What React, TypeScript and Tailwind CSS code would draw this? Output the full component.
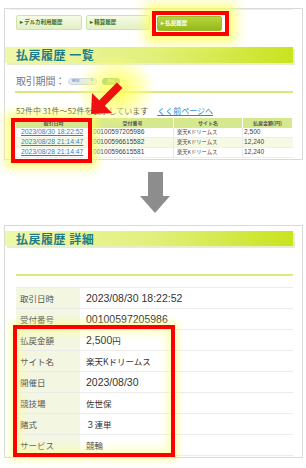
import React from "react";

const cjk = "font-['Noto_Sans_CJK_JP',sans-serif]";
const lat = "font-['Liberation_Sans','Noto_Sans_CJK_JP',sans-serif]";

function Tab({ label, active, w }: { label: string; active?: boolean; w: string }) {
  return (
    <div
      className={`${w} h-[15px] rounded-[2px] flex items-center pl-[3px] ${
        active
          ? "bg-[linear-gradient(to_bottom,#b8d43a,#94ba1c)] border border-[#9cbc2a] text-white"
          : "bg-[linear-gradient(to_bottom,#f6fbe8,#e2f0c4)] border border-[#cfe2a8] text-[#3b6a1c]"
      }`}
    >
      <span className={`${cjk} text-[5.5px] font-bold leading-none whitespace-nowrap`}>▸ {label}</span>
    </div>
  );
}

function HeaderBar({ title, h }: { title: string; h: string }) {
  return (
    <div className="relative w-[288px]">
      <div className="absolute left-[2px] top-[2px] w-[288px] h-full bg-[#e6eecb]" />
      <div
        className={`relative ${h} w-[288px] bg-[linear-gradient(to_right,#eef8aa,#e2f07e_50%,#c9e31e)] flex items-center pl-[11px]`}
      >
        <span className={`${cjk} text-[12px] font-bold text-[#1c7c8a] leading-none tracking-[0.5px]`}>{title}</span>
      </div>
    </div>
  );
}

const rows = [
  { d: "2023/08/30 18:22:52", n: "00100597205986", s: "楽天Kドリームス", a: "2,500", bg: "bg-white" },
  { d: "2023/08/28 21:14:47", n: "00100596615582", s: "楽天Kドリームス", a: "12,240", bg: "bg-[#f6fae4]" },
  { d: "2023/08/28 21:14:47", n: "00100596615581", s: "楽天Kドリームス", a: "12,240", bg: "bg-white" },
];

function DetailRow({ label, children }: { label: string; children: React.ReactNode }) {
  return (
    <div className="flex h-[21px] border-b border-[#ebebeb]">
      <div className="w-[64px] bg-[#f3f7e2] flex items-center pl-[4px]">
        <span className={`${cjk} text-[8.5px] text-[#555] leading-none`}>{label}</span>
      </div>
      <div className="flex-1 flex items-center pl-[6px] text-[#333]">{children}</div>
    </div>
  );
}

const Num = ({ t }: { t: string }) => <span className={`${lat} text-[10.5px] leading-none`}>{t}</span>;
const Jp = ({ t }: { t: string }) => <span className={`${cjk} text-[8.5px] leading-none`}>{t}</span>;

export default function App() {
  return (
    <div className="relative w-[306px] h-[468px] bg-white overflow-hidden">
      {/* Top panel */}
      <div className="ml-[4px] mt-[8px] w-[299px] h-[152px] border border-[#dadada] flex flex-col">
        <div className="ml-[5px] mr-[9px] h-0 border-t border-[#eef0e6]" />
        <div className="flex mt-[5px] pl-[11px] items-start">
          <Tab label="デルカ利用履歴" w="w-[66px]" />
          <div className="w-[4px]" />
          <Tab label="精算履歴" w="w-[64px]" />
          <div className="w-[7px]" />
          <div className="mt-[1px]">
            <Tab label="払戻履歴" active w="w-[65px]" />
          </div>
        </div>
        <div className="mt-[16px]">
          <HeaderBar title="払戻履歴 一覧" h="h-[16px]" />
        </div>
        <div className="mt-[12px] h-[12px] pl-[11px] flex items-center">
          <span className={`${cjk} text-[10px] text-[#777] leading-none tracking-[-0.2px]`}>取引期間：</span>
          <div className="ml-[3px] w-[29px] h-[7px] rounded-full bg-[#e2eaf2] border border-[#cdd8e4] flex items-center justify-between px-[3px]">
            <span className={`${cjk} text-[3.5px] text-[#3a6ab0] leading-none`}>90日</span>
            <span className={`${lat} text-[3.5px] text-[#3a6ab0] leading-none`}>0</span>
          </div>
          <div className="ml-[5px] w-[18px] h-[7px] rounded-full bg-[#4e9c96] flex items-center justify-center">
            <span className={`${cjk} text-[3.5px] text-white leading-none`}>表示</span>
          </div>
        </div>
        <div className="mt-[4px] ml-[10px] w-[278px] h-[1.5px] bg-[#d9ea7c]" />
        <div className="mt-[13px] h-[10px] pl-[11px] flex items-center">
          <span className={`${cjk} text-[8px] text-[#444] leading-none`}>52件中 31件～52件を表示しています</span>
          <span className={`${cjk} ml-[9px] text-[8px] text-[#2a88c8] underline leading-none`}>くく前ページへ</span>
        </div>
        <div className="mt-[2px] ml-[11px] w-[277px] flex flex-col">
          <div className="flex h-[10px] bg-[#d6e88e]">
            {[
              ["取引日時", "w-[76px]"],
              ["受付番号", "w-[82px]"],
              ["サイト名", "w-[69px]"],
              ["払戻金額(円)", "flex-1"],
            ].map(([t, w], i) => (
              <div key={i} className={`${w} flex items-center justify-center border-r border-white`}>
                <span className={`${cjk} text-[5px] text-[#555] font-bold leading-none`}>{t}</span>
              </div>
            ))}
          </div>
          {rows.map((r, i) => (
            <div key={i} className={`flex h-[10.3px] ${r.bg} border-b border-[#eeeeee]`}>
              <div className="w-[76px] flex items-center pl-[5px] border-r border-[#e8e8e8]">
                <span className={`${lat} text-[6.8px] text-[#2a86c4] underline leading-none`}>{r.d}</span>
              </div>
              <div className="w-[82px] flex items-center pl-[1px] border-r border-[#e8e8e8]">
                <span className={`${lat} text-[6.6px] text-[#444] leading-none`}>{r.n}</span>
              </div>
              <div className="w-[69px] flex items-center pl-[3px] border-r border-[#e8e8e8]">
                <span className={`${cjk} text-[5.3px] text-[#444] leading-none`}>{r.s}</span>
              </div>
              <div className="flex-1 flex items-center pl-[1px]">
                <span className={`${lat} text-[6.6px] text-[#444] leading-none`}>{r.a}</span>
              </div>
            </div>
          ))}
        </div>
      </div>

      {/* Gray arrow */}
      <div className="mt-[12px] ml-[140px] w-[30px] h-[41px]">
        <svg width="30" height="41" viewBox="0 0 30 41">
          <polygon points="8,0 23,0 23,24 30,24 15,41 0,24 8,24" fill="#8d8d8d" />
        </svg>
      </div>

      {/* Bottom panel */}
      <div className="ml-[4px] mt-[12px] w-[299px] h-[233px] border border-[#dadada] flex flex-col">
        <div className="mt-[5px]">
          <HeaderBar title="払戻履歴 詳細" h="h-[15px]" />
        </div>
        <div className="mt-[28px] ml-[11px] w-[277px] h-[2px] bg-[#dbe97c]" />
        <div className="mt-[11px] ml-[11px] w-[277px] border-t border-[#ebebeb] flex flex-col">
          <DetailRow label="取引日時"><Num t="2023/08/30 18:22:52" /></DetailRow>
          <DetailRow label="受付番号"><Num t="00100597205986" /></DetailRow>
          <DetailRow label="払戻金額"><Num t="2,500" /><Jp t="円" /></DetailRow>
          <DetailRow label="サイト名"><Jp t="楽天Kドリームス" /></DetailRow>
          <DetailRow label="開催日"><Num t="2023/08/30" /></DetailRow>
          <DetailRow label="競技場"><Jp t="佐世保" /></DetailRow>
          <DetailRow label="賭式"><Jp t=" ３連単" /></DetailRow>
          <DetailRow label="サービス"><Jp t="競輪" /></DetailRow>
        </div>
      </div>

      {/* Annotations */}
      <div className="absolute left-[76px] top-[54px] w-[80px] h-[72px] bg-[radial-gradient(ellipse_at_center,rgba(255,255,70,0.9)_0%,rgba(255,255,110,0.55)_40%,rgba(255,255,160,0)_70%)]" />
      <div className="absolute left-[152px] top-[11px] w-[77px] h-[25px] border-[4px] border-[#ff0000] shadow-[0_0_11px_7px_rgba(255,255,90,0.8)]" />
      <div className="absolute left-[11px] top-[118px] w-[81px] h-[45px] border-[4px] border-[#ff0000] shadow-[0_0_9px_5px_rgba(255,255,90,0.8)]" />
      <div className="absolute left-[13px] top-[325px] w-[162px] h-[132px] border-[4.5px] border-[#ff0000] shadow-[0_0_7px_3px_rgba(255,255,110,0.55),inset_0_0_8px_4px_rgba(255,255,120,0.5)]" />
      <svg className="absolute left-0 top-0" width="306" height="468" viewBox="0 0 306 468">
        <polygon
          points="91,114 92,93 99.2,100.2 116.9,82.5 122.5,88.1 104.8,105.8 112,113"
          fill="#ee1111"
        />
      </svg>
    </div>
  );
}
